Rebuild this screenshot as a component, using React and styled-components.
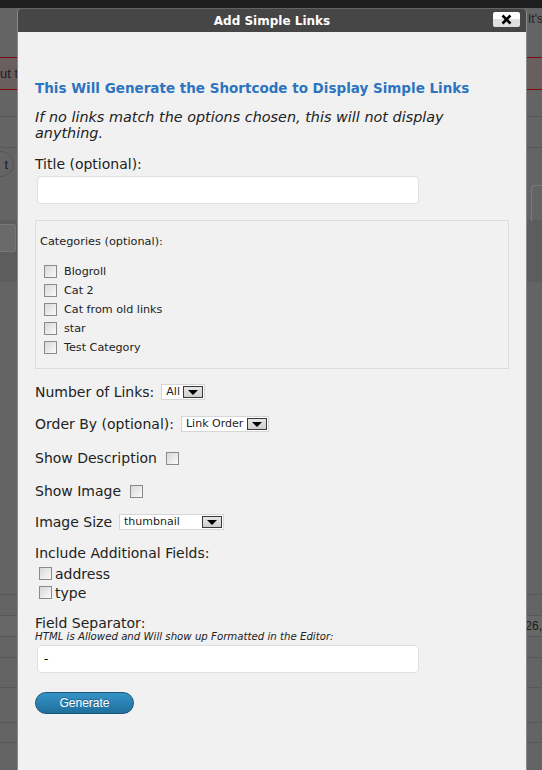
import styled, { createGlobalStyle } from "styled-components";

const GlobalStyle = createGlobalStyle`
    html, body {
        margin: 0;
        padding: 0;
    }
    body {
        background: #646464;
        overflow: hidden;
    }
`;

// ---- page underneath the dialog ----
const Page = styled.div`
    position: relative;
    width: 542px;
    height: 770px;
    overflow: hidden;
    background: #646464;
    font-family: "Liberation Sans", Arial, sans-serif;
    font-size: 13px;
    color: #1c1c1c;
`;
const TopBar = styled.div`
    height: 8px;
    background: #1e1e1e;
`;
const BgRow = styled.div`
    box-sizing: border-box;
    height: ${p => p.$h}px;
    display: flex;
    justify-content: space-between;
    align-items: ${p => p.$align || 'center'};
    background: ${p => p.$bg || 'transparent'};
    border-bottom: ${p => p.$line ? '1px solid #585858' : 'none'};
    white-space: nowrap;
`;
const Notice = styled(BgRow)`
    background: #6a5f5f;
    border-top: 1px solid #7d0b0b;
    border-bottom: 1px solid #7d0b0b;
`;
const BgText = styled.span`
    margin: ${p => p.$m || '0'};
    font-size: ${p => p.$size || 13}px;
`;
const BgPill = styled.div`
    width: 30px;
    height: 26px;
    margin-left: -16px;
    border: 1px solid #555;
    border-radius: 13px;
    display: flex;
    align-items: center;
    justify-content: flex-end;
    padding-right: 5px;
    box-sizing: border-box;
`;
const BgTab = styled.div`
    width: 10px;
    height: 35px;
    margin-left: auto;
    margin-top: 5px;
    border-left: 1px solid #7a7a7a;
    border-top: 1px solid #7a7a7a;
    border-top-left-radius: 4px;
`;
const BgIconBtn = styled.div`
    width: 30px;
    height: 26px;
    margin: 4px 0 0 -16px;
    border: 1px solid #777;
    border-radius: 2px;
    background: #6a6a6a;
`;

// ---- dialog ----
const Dialog = styled.div`
    position: absolute;
    top: 9px;
    left: 17px;
    width: 510px;
    height: 800px;
    box-sizing: border-box;
    border: 1px solid #8a8a8a;
    border-top: none;
    border-radius: 4px 4px 0 0;
    background: #f1f1f1;
    font-family: "DejaVu Sans", Verdana, sans-serif;
    color: #222;
`;
const TitleBar = styled.div`
    height: 23px;
    background: #464646;
    border-radius: 3px 3px 0 0;
    display: flex;
    align-items: center;
    justify-content: center;
    position: relative;
    color: #fff;
    font-weight: bold;
    font-size: 12px;
`;
const CloseBtn = styled.div`
    position: absolute;
    right: 6px;
    top: 3px;
    width: 27px;
    height: 15px;
    box-sizing: border-box;
    background: linear-gradient(#ffffff 50%, #e0e0e0 50%);
    border-radius: 2px;
    display: flex;
    align-items: center;
    justify-content: center;
`;
const Body = styled.div`
    padding: 47px 18px 0 17px;
`;
const Heading = styled.h2`
    margin: 0;
    height: 18px;
    line-height: 18px;
    font-size: 13.5px;
    font-weight: bold;
    color: #2d74c0;
`;
const Intro = styled.p`
    margin: 12px 0 0;
    font-size: 14.4px;
    line-height: 16px;
    font-style: italic;
    width: 430px;
`;
const Label = styled.div`
    margin-top: ${p => p.$mt || 0}px;
    height: 18px;
    line-height: 18px;
    font-size: 14px;
    display: flex;
    align-items: center;
`;
const Hint = styled.div`
    height: 10px;
    line-height: 10px;
    font-size: 10.2px;
    font-style: italic;
    white-space: nowrap;
`;
const TextInput = styled.div`
    margin: 3px 0 0 2px;
    width: 382px;
    height: 28px;
    box-sizing: border-box;
    background: #fff;
    border: 1px solid #dfdfdf;
    border-radius: 4px;
    padding-left: 6px;
    display: flex;
    align-items: center;
    font-size: 12px;
    color: #000;
`;
const Fieldset = styled.div`
    margin-top: 16px;
    width: 474px;
    height: 149px;
    box-sizing: border-box;
    border: 1px solid #dcdcdc;
    padding: 14px 0 0 4px;
`;
const Legend = styled.div`
    font-size: 11.3px;
    line-height: 14px;
    height: 14px;
`;
const CheckList = styled.div`
    margin: 13px 0 0 4px;
    display: flex;
    flex-direction: column;
`;
const CheckRow = styled.div`
    height: 19px;
    display: flex;
    align-items: center;
    gap: ${p => p.$gap || 7}px;
    font-size: ${p => p.$size || 11.2}px;
    margin-left: ${p => p.$ml || 0}px;
`;
const Check = styled.span`
    display: inline-block;
    width: 13px;
    height: 13px;
    box-sizing: border-box;
    border: 1px solid #8a8a8a;
    background: linear-gradient(135deg, #d8d8d8, #fafafa);
    margin-left: ${p => p.$ml || 0}px;
    flex: none;
`;
const Select = styled.div`
    margin-left: 7px;
    width: ${p => p.$w}px;
    height: 16px;
    box-sizing: border-box;
    background: #fff;
    border: 1px solid #d6d6d6;
    display: flex;
    align-items: center;
    justify-content: space-between;
    padding: 0 1px 0 4px;
    font-size: 11px;
`;
const SelectArrow = styled.span`
    width: 20px;
    height: 12px;
    box-sizing: border-box;
    border: 1px solid #3a3a3a;
    background: linear-gradient(#e6e6e6, #cfcfcf);
    display: flex;
    align-items: center;
    justify-content: center;
    &::after {
        content: "";
        border-left: 5px solid transparent;
        border-right: 5px solid transparent;
        border-top: 5px solid #000;
    }
`;
const GenerateBtn = styled.button`
    margin-top: 19px;
    width: 99px;
    height: 22px;
    border: 1px solid #1a5577;
    border-radius: 11px;
    background: linear-gradient(#3593c8, #206f9c);
    color: #fff;
    font-family: "Liberation Sans", Arial, sans-serif;
    font-size: 12px;
    padding: 0;
    text-shadow: 0 -1px 0 rgba(0, 0, 0, .3);
`;

const categories = ['Blogroll', 'Cat 2', 'Cat from old links', 'star', 'Test Category'];

function Dropdown({ w, value }) {
    return (
        <Select $w={w}>
            <span>{value}</span>
            <SelectArrow />
        </Select>
    );
}

export default function App() {
    return (
        <>
            <GlobalStyle />
            <Page>
                <TopBar />
                <BgRow $h={49} $align="flex-start">
                    <span />
                    <BgText $size={12} $m="4px -1px 0 0">It's</BgText>
                </BgRow>
                <Notice $h={33}>
                    <BgText>ut th</BgText>
                </Notice>
                <BgRow $h={27} $line />
                <BgRow $h={31} $line />
                <BgRow $h={32}>
                    <BgPill>t</BgPill>
                </BgRow>
                <BgRow $h={40} $align="flex-start">
                    <BgTab />
                </BgRow>
                <BgRow $h={62} $bg="#5d5d5d" $align="flex-start">
                    <BgIconBtn />
                </BgRow>
                <BgRow $h={313} $line />
                <BgRow $h={21} $line />
                <BgRow $h={21} $line $bg="#676767">
                    <span />
                    <BgText $size={12} $m="0 0 0 0">26,</BgText>
                </BgRow>
                <BgRow $h={21} $line />
                <BgRow $h={30} $line />
                <BgRow $h={35} $line />
                <BgRow $h={20} $line />

                <Dialog>
                    <TitleBar>
                        Add Simple Links
                        <CloseBtn>
                            <svg width="11" height="11" viewBox="0 0 11 11">
                                <path d="M1.5 1.5 L9.5 9.5 M9.5 1.5 L1.5 9.5" stroke="#000" strokeWidth="2.6" />
                            </svg>
                        </CloseBtn>
                    </TitleBar>
                    <Body>
                        <Heading>This Will Generate the Shortcode to Display Simple Links</Heading>
                        <Intro>If no links match the options chosen, this will not display anything.</Intro>
                        <Label $mt={14}>Title (optional):</Label>
                        <TextInput />
                        <Fieldset>
                            <Legend>Categories (optional):</Legend>
                            <CheckList>
                                {categories.map(c => (
                                    <CheckRow key={c}>
                                        <Check />
                                        {c}
                                    </CheckRow>
                                ))}
                            </CheckList>
                        </Fieldset>
                        <Label $mt={14}>
                            Number of Links:
                            <Dropdown w={44} value="All" />
                        </Label>
                        <Label $mt={14}>
                            Order By (optional):
                            <Dropdown w={88} value="Link Order" />
                        </Label>
                        <Label $mt={16}>
                            Show Description
                            <Check $ml={9} />
                        </Label>
                        <Label $mt={15}>
                            Show Image
                            <Check $ml={9} />
                        </Label>
                        <Label $mt={13}>
                            Image Size
                            <Dropdown w={105} value="thumbnail" />
                        </Label>
                        <Label $mt={13}>Include Additional Fields:</Label>
                        <CheckRow $size={14} $gap={3} $ml={4} style={{ marginTop: 2 }}>
                            <Check />
                            address
                        </CheckRow>
                        <CheckRow $size={14} $gap={3} $ml={4}>
                            <Check />
                            type
                        </CheckRow>
                        <Label $mt={12}>Field Separator:</Label>
                        <Hint>HTML is Allowed and Will show up Formatted in the Editor:</Hint>
                        <TextInput>-</TextInput>
                        <GenerateBtn>Generate</GenerateBtn>
                    </Body>
                </Dialog>
            </Page>
        </>
    );
}
